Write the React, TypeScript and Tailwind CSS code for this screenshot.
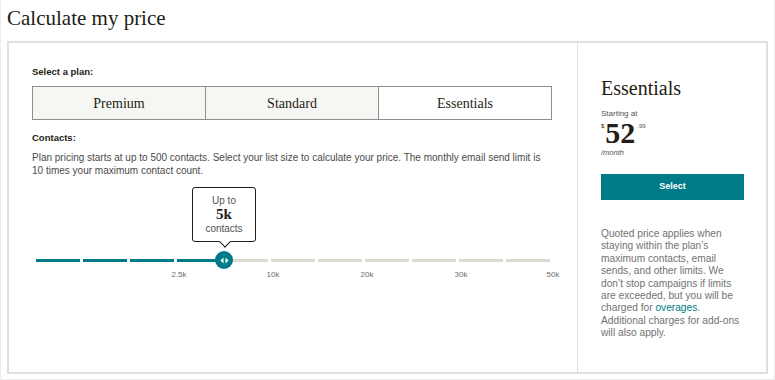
const serif = "font-['Liberation_Serif',Georgia,serif]";
const sans = "font-['Liberation_Sans',Arial,sans-serif]";

const plans = ["Premium", "Standard", "Essentials"];
const segments = 11;
const filled = 4;
const ticks = [
  { label: "2.5k", x: 143 },
  { label: "10k", x: 237 },
  { label: "20k", x: 331 },
  { label: "30k", x: 425 },
  { label: "50k", x: 517 },
];

function Slider() {
  return (
    <div className="relative ml-[4px] mt-[10px] w-[514px]">
      {/* tooltip */}
      <div className="absolute left-[156px] top-0 flex h-[55px] w-[64px] flex-col items-center rounded-[3px] border border-[#241c15] bg-white pt-[6px]">
        <span className={`${sans} text-[10px] leading-[13px] text-[#555]`}>Up to</span>
        <span className={`${serif} text-[15px] font-bold leading-[15px] text-[#241c15]`}>5k</span>
        <span className={`${sans} text-[10px] leading-[14px] text-[#555]`}>contacts</span>
        <span className="absolute bottom-[-5px] left-[28px] h-[8px] w-[8px] rotate-45 border-b border-r border-[#241c15] bg-white" />
      </div>

      <div className="h-[72px]" />
      <div className="flex h-[3px] gap-[3px]">
        {Array.from({ length: segments }).map((_, i) => (
          <div
            key={i}
            className={`h-full w-[44px] ${i < filled ? "bg-[#007c89]" : "bg-[#dddbd3]"}`}
          />
        ))}
      </div>

      {/* thumb */}
      <div className="absolute left-[179px] top-[64px] flex h-[18px] w-[18px] items-center justify-center rounded-full bg-[#007c89]">
        <svg width="9" height="7" viewBox="0 0 9 7">
          <path d="M3.5 0.5 L0.5 3.5 L3.5 6.5 Z" fill="#fff" />
          <path d="M5.5 0.5 L8.5 3.5 L5.5 6.5 Z" fill="#fff" />
        </svg>
      </div>

      <div className={`relative mt-[8px] h-[10px] ${sans} text-[8px] leading-[10px] text-[#6b6b6b]`}>
        {ticks.map((t) => (
          <span key={t.label} className="absolute top-0 -translate-x-1/2" style={{ left: t.x }}>
            {t.label}
          </span>
        ))}
      </div>
    </div>
  );
}

export default function App() {
  return (
    <div className="h-[380px] w-[775px] border-x border-b border-[#ececec] bg-white">
      <div className={`h-[41px] pl-[6px] pt-[3px] ${serif} text-[21px] leading-[30px] text-[#241c15]`}>
        Calculate my price
      </div>

      <div className="mx-[6px] flex h-[333px] border-2 border-[#e2e0da]">
        <div className="flex-1 pl-[23px] pt-[23px]">
          <div className={`${sans} text-[9.5px] font-bold leading-[12px] text-[#241c15]`}>
            Select a plan:
          </div>
          <div className="mt-[8px] flex h-[34px] w-[520px] border-[1.5px] border-[#8f8f8f]">
            {plans.map((p, i) => (
              <div
                key={p}
                className={`flex flex-1 items-center justify-center ${serif} text-[14px] text-[#241c15] ${
                  i < 2 ? "border-r-[1.5px] border-[#8f8f8f] bg-[#f6f6f3]" : "bg-white"
                }`}
              >
                {p}
              </div>
            ))}
          </div>

          <div className={`mt-[12px] ${sans} text-[9.5px] font-bold leading-[12px] text-[#241c15]`}>
            Contacts:
          </div>
          <p className={`mt-[7px] w-[514px] ${sans} text-[10px] leading-[13px] text-[#4a4a4a]`}>
            Plan pricing starts at up to 500 contacts. Select your list size to calculate your price. The monthly email send limit is 10 times your maximum contact count.
          </p>

          <Slider />
        </div>

        <div className="w-[189px] border-l border-[#e2e0da] pl-[23px] pr-[22px] pt-[32px]">
          <div className={`${serif} text-[20px] leading-[26px] text-[#241c15]`}>Essentials</div>
          <div className={`mt-[8px] ${sans} text-[8px] leading-[10px] text-[#555]`}>Starting at</div>
          <div className="flex items-start text-[#241c15]">
            <span className={`${sans} mt-[3px] text-[6px] leading-[8px]`}>$</span>
            <span className={`${serif} ml-[1px] text-[30px] font-bold leading-[28px]`}>52</span>
            <span className={`${sans} ml-[2px] mt-[3px] text-[6px] leading-[8px] text-[#555]`}>.99</span>
          </div>
          <div className={`mt-[1px] ${sans} text-[7.5px] italic leading-[10px] text-[#555]`}>/month</div>
          <button
            className={`mt-[16px] flex h-[26px] w-full items-center justify-center bg-[#007c89] ${sans} text-[9px] font-bold text-white`}
          >
            Select
          </button>
          <p className={`mt-[28px] ${sans} text-[10.2px] leading-[12.4px] text-[#727272]`}>
            Quoted price applies when staying within the plan’s maximum contacts, email sends, and other limits. We don’t stop campaigns if limits are exceeded, but you will be charged for{" "}
            <span className="text-[#007c89]">overages</span>. Additional charges for add-ons will also apply.
          </p>
        </div>
      </div>
    </div>
  );
}
